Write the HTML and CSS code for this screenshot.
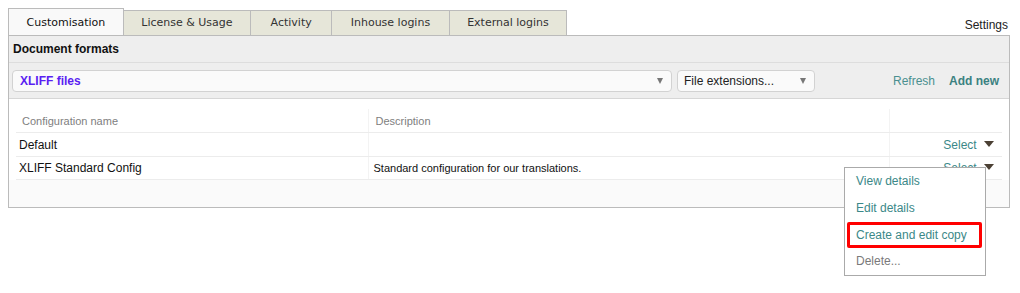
FILE: index.html
```html
<!DOCTYPE html>
<html lang="en">
<head>
<meta charset="UTF-8">
<title>Customisation - Document formats</title>
<link rel="stylesheet" href="styles.css">
</head>
<body>
<div class="page">
    <div class="topbar">
        <ul class="tabs">
            <li class="tab active">Customisation</li>
            <li class="tab">License &amp; Usage</li>
            <li class="tab tab-activity">Activity</li>
            <li class="tab tab-inhouse">Inhouse logins</li>
            <li class="tab">External logins</li>
        </ul>
        <div class="settings">Settings</div>
    </div>

    <div class="panel">
        <div class="panel-title">Document formats</div>

        <div class="toolbar">
            <div class="select format-select">
                <span>XLIFF files</span>
                <span class="arrow"></span>
            </div>
            <div class="select ext-select">
                <span>File extensions...</span>
                <span class="arrow"></span>
            </div>
            <div class="actions">
                <a href="#" class="refresh">Refresh</a>
                <a href="#" class="add-new">Add new</a>
            </div>
        </div>

        <div class="content">
            <table class="configs">
                <colgroup>
                    <col class="w-name">
                    <col>
                    <col class="w-action">
                </colgroup>
                <thead>
                    <tr>
                        <th class="col-name">Configuration name</th>
                        <th class="col-desc">Description</th>
                        <th class="col-action"></th>
                    </tr>
                </thead>
                <tbody>
                    <tr>
                        <td class="col-name">Default</td>
                        <td class="col-desc"></td>
                        <td class="col-action"><a href="#" class="select-link">Select <span class="caret"></span></a></td>
                    </tr>
                    <tr class="last">
                        <td class="col-name">XLIFF Standard Config</td>
                        <td class="col-desc">Standard configuration for our translations.</td>
                        <td class="col-action"><a href="#" class="select-link">Select <span class="caret"></span></a></td>
                    </tr>
                </tbody>
            </table>
        </div>
        <div class="panel-foot"></div>

        <!-- open menu of the second row's "Select" -->
        <ul class="menu">
            <li><a href="#">View details</a></li>
            <li><a href="#">Edit details</a></li>
            <li class="highlight"><a href="#">Create and edit copy</a></li>
            <li class="disabled">Delete...</li>
        </ul>
    </div>
</div>
</body>
</html>
```

FILE: styles.css
```css
html,
body {
    height: 100%;
}

body {
    margin: 0;
    font-family: "Liberation Sans", Arial, sans-serif;
    font-size: 12px;
    color: #111;
    background: #fff;
}

a {
    text-decoration: none;
}

.page {
    padding: 0 10px 0 8px;
}

/* tabs + settings */
.topbar {
    display: flex;
    justify-content: space-between;
    align-items: flex-end;
    height: 35px;
}

.tabs {
    display: flex;
    align-items: flex-end;
    list-style: none;
    margin: 0;
    padding: 0;
    font-family: "DejaVu Sans", Verdana, sans-serif;
    font-size: 11px;
}

.tab {
    height: 24px;
    line-height: 24px;
    padding: 0 17.5px;
    margin-left: -1px;
    border: 1px solid #bbb;
    border-bottom: none;
    background: #e6e6d9;
    color: #333;
}

.tab:first-child {
    margin-left: 0;
}

.tab-activity {
    padding: 0 19.5px;
}

.tab-inhouse {
    padding: 0 18.5px;
}

.tab.active {
    padding-top: 2px;
    background: #f9f9f9;
    color: #111;
    position: relative;
    z-index: 1;
}

.settings {
    margin: 0 2px 3px 0;
    color: #222;
}

/* panel */
.panel {
    position: relative;
    border: 1px solid #bbb;
    background: #eee;
}

.panel-title {
    height: 26px;
    line-height: 26px;
    padding-left: 4px;
    font-weight: bold;
    color: #111;
    border-bottom: 1px solid #ddd;
}

.toolbar {
    display: flex;
    align-items: center;
    height: 36px;
    box-sizing: border-box;
    padding: 0 10px 0 3px;
    border-bottom: 1px solid #d6d6d6;
}

.select {
    display: flex;
    align-items: center;
    justify-content: space-between;
    height: 22px;
    box-sizing: border-box;
    border: 1px solid #d2d2d2;
    border-radius: 4px;
    background: #fafafa;
}

.format-select {
    flex: 1;
    padding: 0 8px 0 7px;
    color: #5a1ff2;
    font-weight: bold;
}

.ext-select {
    width: 138px;
    margin-left: 5px;
    padding: 0 8px 0 6px;
    color: #222;
}

.arrow {
    width: 0;
    height: 0;
    border-left: 3px solid transparent;
    border-right: 3px solid transparent;
    border-top: 6px solid #777;
}

.actions {
    display: flex;
    gap: 14px;
    margin-left: 78px;
}

.actions a {
    color: #4a9090;
}

.actions .add-new {
    font-weight: bold;
    color: #3b8181;
}

/* table */
.content {
    background: #fff;
    padding: 10px 7px 0 7px;
}

.configs {
    width: 100%;
    table-layout: fixed;
    border-collapse: collapse;
}

.w-name {
    width: 352px;
}

.w-action {
    width: 113px;
}

.configs th,
.configs td {
    padding: 0;
    border-bottom: 1px solid #ececec;
}

.configs th {
    height: 23px;
    text-align: left;
    font-weight: normal;
    font-size: 11px;
    color: #808080;
}

.configs td {
    height: 23px;
}

.configs tr.last td {
    height: 22px;
}

.configs th.col-name {
    padding-left: 6px;
}

.configs td.col-name {
    padding-left: 3px;
}

.configs .col-desc {
    border-left: 1px solid #f3f3f3;
    padding-left: 5px;
}

.configs th.col-desc {
    padding-left: 7px;
}

.configs td.col-desc {
    font-size: 11px;
}

.configs .col-action {
    text-align: right;
    padding-right: 8px;
    border-left: 1px solid #f3f3f3;
}

.select-link {
    color: #3b8888;
}

.caret {
    display: inline-block;
    width: 0;
    height: 0;
    margin-left: 4px;
    vertical-align: 2px;
    border-left: 5.5px solid transparent;
    border-right: 5.5px solid transparent;
    border-top: 6px solid #4b4034;
}

.panel-foot {
    height: 27px;
    background: #fafafa;
}

/* dropdown menu, lies over the table */
.menu {
    position: absolute;
    top: 131px;
    right: 23px;
    z-index: 2;
    width: 142px;
    box-sizing: border-box;
    margin: 0;
    padding: 0;
    list-style: none;
    background: #fff;
    border: 1px solid #aaa;
}

.menu li {
    height: 26.75px;
    line-height: 26.75px;
    padding-left: 11px;
    box-sizing: border-box;
}

.menu a {
    color: #3b8888;
}

.menu .highlight {
    margin: 0 3px 0 2px;
    padding-left: 6px;
    line-height: 20.75px;
    border: 3px solid #ff0000;
    border-radius: 2px;
}

.menu .disabled {
    color: #7a7a7a;
}
```
